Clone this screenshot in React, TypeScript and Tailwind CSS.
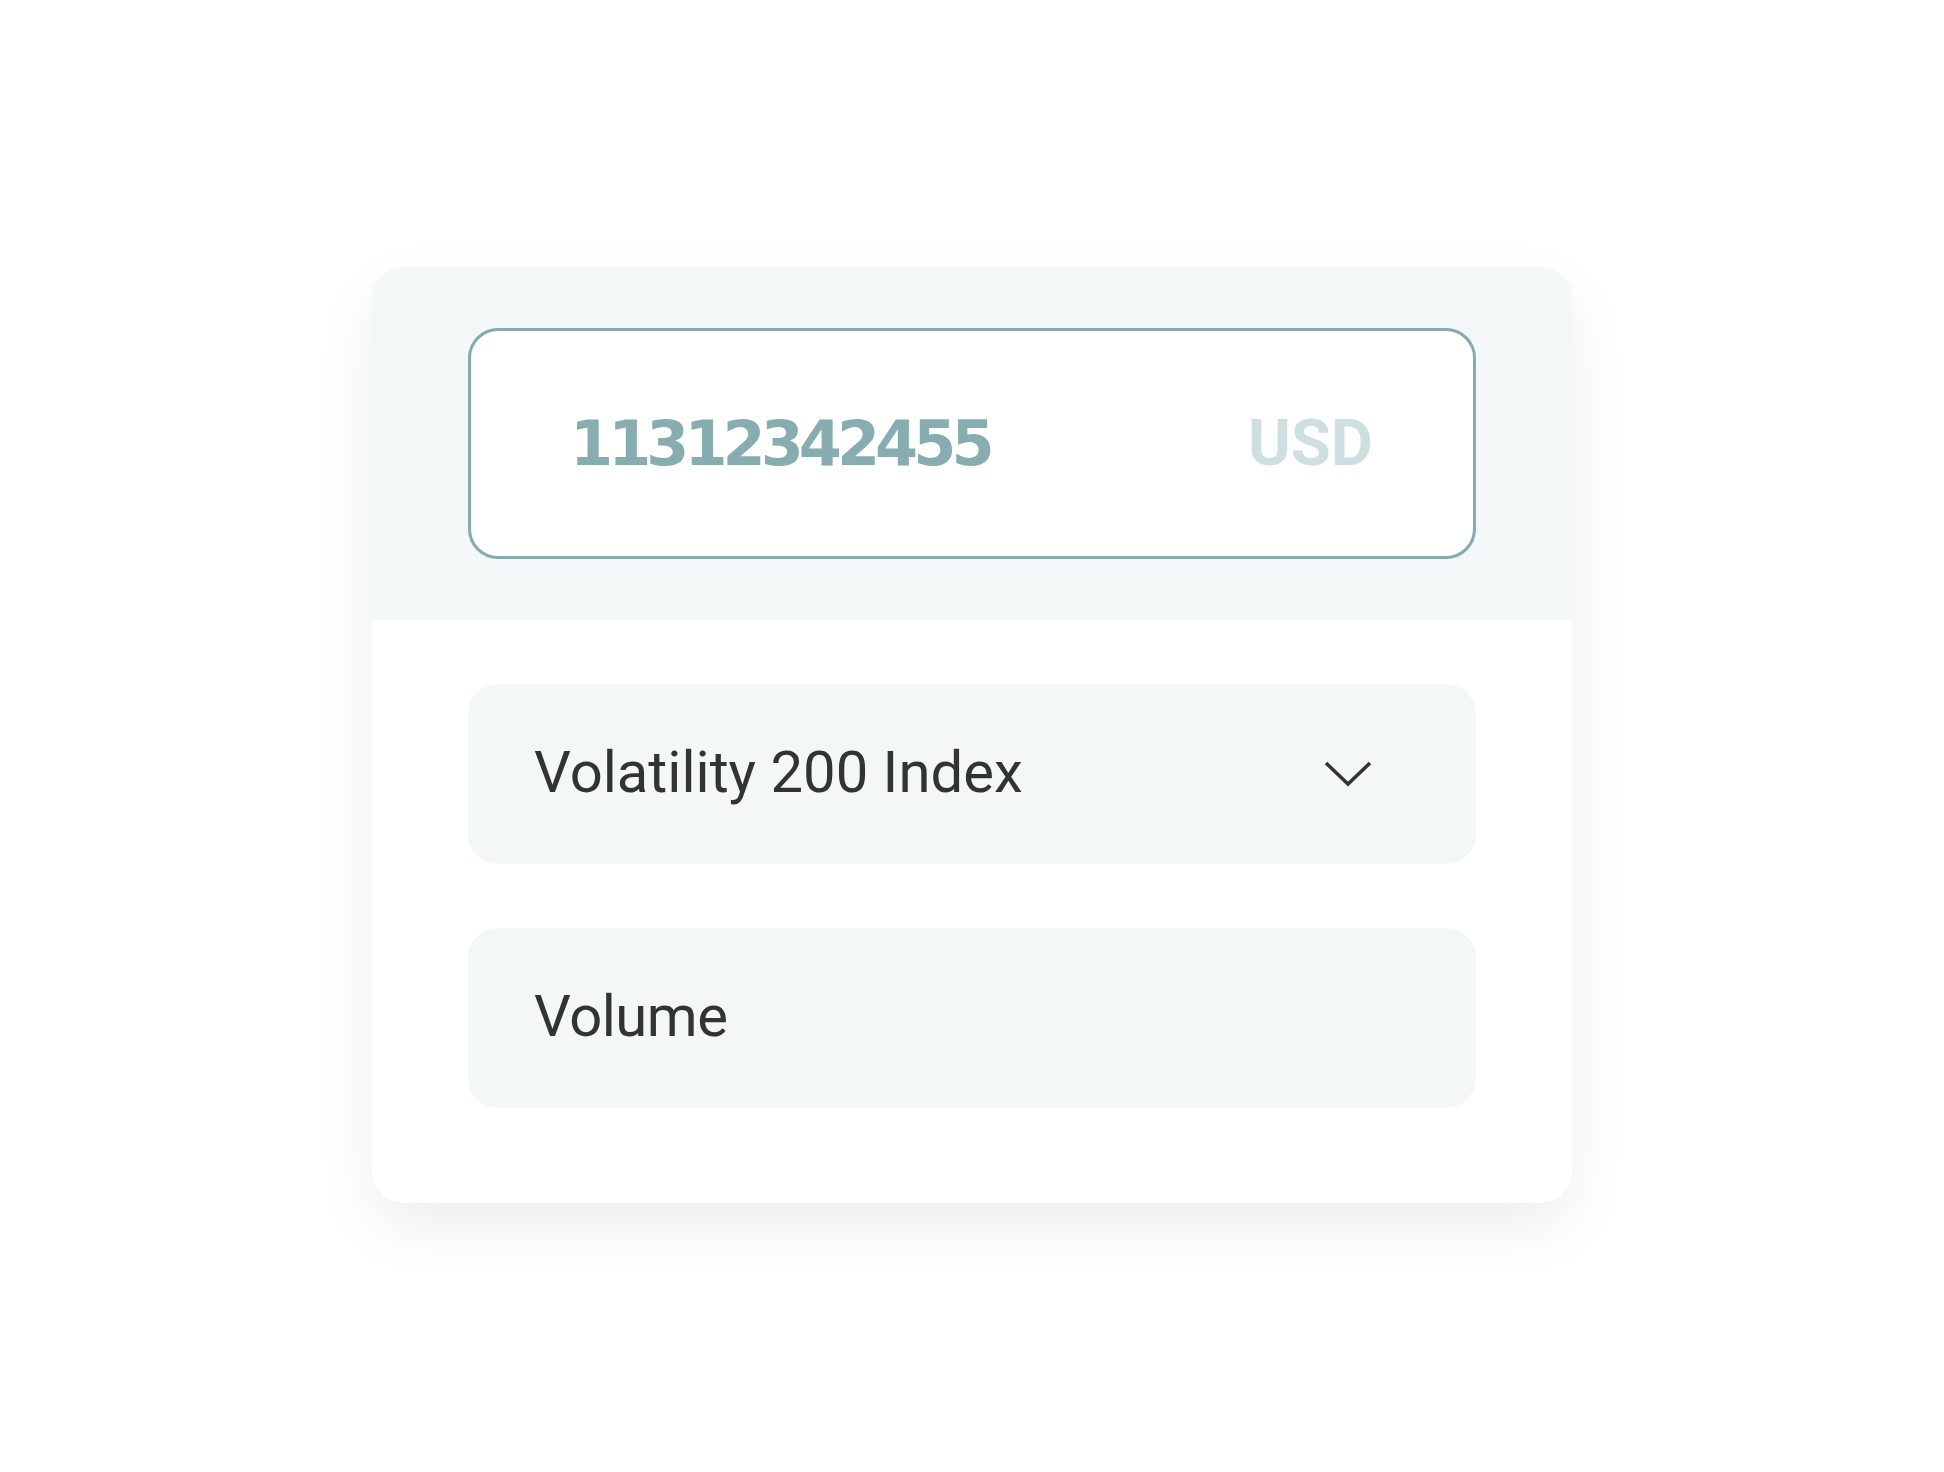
import React from "react";

export default function App() {
  return (
    <div className="min-h-screen w-full bg-white flex items-center justify-center">
      <div className="w-[1200px] h-[936px] -mt-[2px] rounded-[32px] bg-white shadow-[0_24px_60px_rgba(0,0,0,0.07)] overflow-hidden flex flex-col">
        <div className="h-[353px] bg-[#f4f7f7] px-[96px] py-[61px]">
          <div className="h-[231px] rounded-[30px] border-[3px] border-[#86abaf] bg-white flex items-center justify-between pl-[99px] pr-[100px]">
            <span
              className="text-[62px] font-bold leading-none text-[#87adb1] tracking-[-5px]"
              style={{ fontFamily: "'DejaVu Sans', sans-serif" }}
            >
              11312342455
            </span>
            <span
              className="text-[65px] font-bold leading-none text-[#cddfdf]"
              style={{ fontFamily: "Roboto, sans-serif" }}
            >
              USD
            </span>
          </div>
        </div>
        <div className="flex-1 px-[96px] pt-[64px] flex flex-col gap-[64px]">
          <div className="h-[180px] rounded-[30px] bg-[#f4f7f7] flex items-center justify-between pl-[66px] pr-[104px]">
            <span
              className="text-[58px] leading-none text-[#333333] -mt-[4px]"
              style={{ fontFamily: "Roboto, sans-serif" }}
            >
              Volatility 200 Index
            </span>
            <svg width="48" height="26" viewBox="0 0 48 26" fill="none">
              <path d="M2 2 L24 23 L46 2" stroke="#333333" strokeWidth="3.5" />
            </svg>
          </div>
          <div className="h-[180px] rounded-[30px] bg-[#f4f7f7] flex items-center pl-[66px]">
            <span
              className="text-[58px] leading-none text-[#333333] -mt-[4px] tracking-[-0.5px]"
              style={{ fontFamily: "Roboto, sans-serif" }}
            >
              Volume
            </span>
          </div>
        </div>
      </div>
    </div>
  );
}
